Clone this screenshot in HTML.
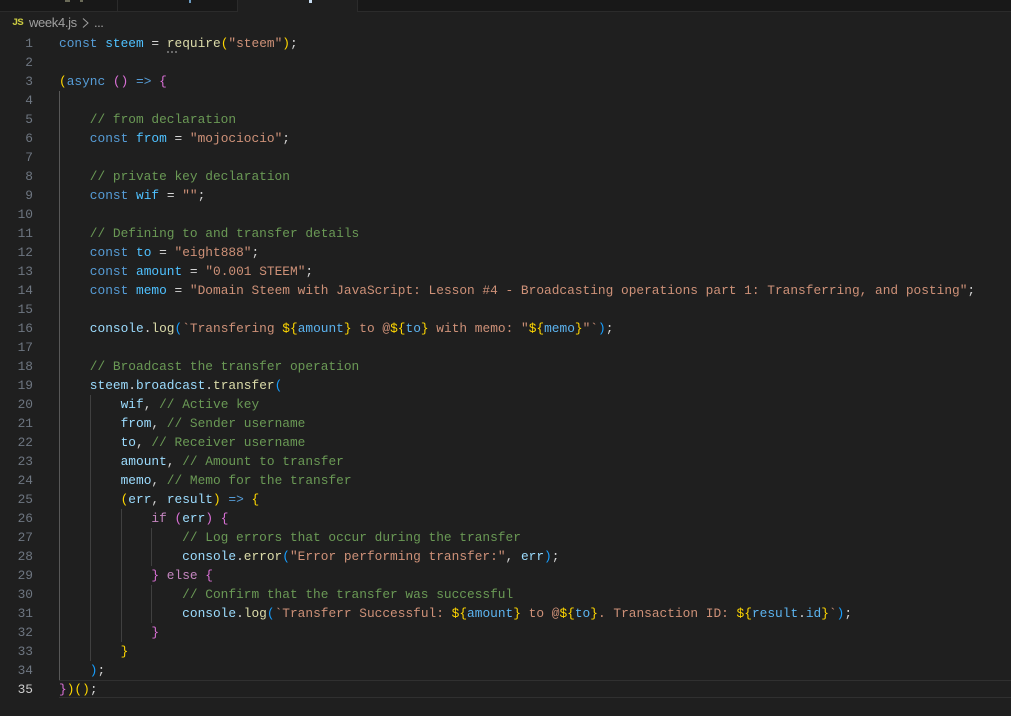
<!DOCTYPE html>
<html><head><meta charset="utf-8"><style>
html,body{margin:0;padding:0;background:#1f1f1f}
body{width:1011px;height:716px;position:relative;overflow:hidden;font-family:"Liberation Mono",monospace}
.a{position:absolute}
.l{position:absolute;left:59px;height:19px;line-height:19px;font-size:12.83px;white-space:pre;color:#ccc}
.n{position:absolute;left:0;width:33px;text-align:right;height:19px;line-height:19px;font-size:12.83px;color:#6e7681}
.g{position:absolute;width:1px;background:#404040}
.k{color:#569cd6}.c{color:#4fc1ff}.v{color:#9cdcfe}.s{color:#ce9178}.m{color:#6a9955}.f{color:#dcdcaa}.x{color:#c586c0}
.y{color:#ffd700}.p{color:#da70d6}.b{color:#179fff}.o{color:#d4d4d4}.t{color:#5cb4f0}
</style></head><body>
<div class="a" style="left:0;top:0;width:1011px;height:11px;background:#181818"></div>
<div class="a" style="left:0;top:11px;width:1011px;height:1px;background:#2b2b2b"></div>
<div class="a" style="left:117px;top:0;width:1px;height:11px;background:#2b2b2b"></div>
<div class="a" style="left:237px;top:0;width:1px;height:11px;background:#2b2b2b"></div>
<div class="a" style="left:238px;top:0;width:119px;height:12px;background:#1f1f1f"></div>
<div class="a" style="left:357px;top:0;width:1px;height:11px;background:#2b2b2b"></div>
<div class="a" style="left:65px;top:0;width:5px;height:2px;background:#6a6a58"></div>
<div class="a" style="left:80px;top:0;width:3px;height:2px;background:#6a6a58"></div>
<div class="a" style="left:189px;top:0;width:2px;height:3px;background:#6a9ac0"></div>
<div class="a" style="left:309px;top:0;width:3px;height:3px;background:#c8dcf0"></div>

<div class="a" style="left:12px;top:17px;height:12px;font:bold 10.5px/12px 'Liberation Mono',monospace;color:#cbcb41;letter-spacing:-.9px">JS</div>
<div class="a" style="left:29px;top:15px;height:16px;font:13px/16px 'Liberation Sans',sans-serif;letter-spacing:-.35px;color:#a0a0a0">week4.js</div>
<svg class="a" style="left:81px;top:17px" width="10" height="12" viewBox="0 0 10 12"><path d="M2 1.5 7 6 2 10.5" fill="none" stroke="#a0a0a0" stroke-width="1"/></svg>
<div class="a" style="left:94px;top:15px;height:16px;font:13px/16px 'Liberation Sans',sans-serif;letter-spacing:-.5px;color:#a0a0a0">...</div>

<div class="a" style="left:59px;top:680px;width:952px;height:1px;background:#303030"></div>
<div class="a" style="left:59px;top:697px;width:952px;height:1px;background:#303030"></div>

<div class="g" style="left:59px;top:91px;height:589px;background:#585858"></div>
<div class="g" style="left:90px;top:395px;height:266px"></div>
<div class="g" style="left:121px;top:509px;height:133px"></div>
<div class="g" style="left:151px;top:528px;height:38px"></div>
<div class="g" style="left:151px;top:585px;height:38px"></div>

<svg class="a" style="left:167px;top:51px" width="50" height="3"><path d="M0 1h2M4 1h2M8 1h2" stroke="#b5b5b5" stroke-width="1"/></svg>

<div class="n" style="top:34px">1</div><div class="l" style="top:34px"><span class="k">const</span> <span class="c">steem</span> <span class="o">=</span> <span class="f">require</span><span class="y">(</span><span class="s">"steem"</span><span class="y">)</span><span class="o">;</span></div>
<div class="n" style="top:53px">2</div>
<div class="n" style="top:72px">3</div><div class="l" style="top:72px"><span class="y">(</span><span class="k">async</span> <span class="p">()</span> <span class="k">=&gt;</span> <span class="p">{</span></div>
<div class="n" style="top:91px">4</div>
<div class="n" style="top:110px">5</div><div class="l m" style="top:110px">    // from declaration</div>
<div class="n" style="top:129px">6</div><div class="l" style="top:129px">    <span class="k">const</span> <span class="c">from</span> <span class="o">=</span> <span class="s">"mojociocio"</span><span class="o">;</span></div>
<div class="n" style="top:148px">7</div>
<div class="n" style="top:167px">8</div><div class="l m" style="top:167px">    // private key declaration</div>
<div class="n" style="top:186px">9</div><div class="l" style="top:186px">    <span class="k">const</span> <span class="c">wif</span> <span class="o">=</span> <span class="s">""</span><span class="o">;</span></div>
<div class="n" style="top:205px">10</div>
<div class="n" style="top:224px">11</div><div class="l m" style="top:224px">    // Defining to and transfer details</div>
<div class="n" style="top:243px">12</div><div class="l" style="top:243px">    <span class="k">const</span> <span class="c">to</span> <span class="o">=</span> <span class="s">"eight888"</span><span class="o">;</span></div>
<div class="n" style="top:262px">13</div><div class="l" style="top:262px">    <span class="k">const</span> <span class="c">amount</span> <span class="o">=</span> <span class="s">"0.001 STEEM"</span><span class="o">;</span></div>
<div class="n" style="top:281px">14</div><div class="l" style="top:281px">    <span class="k">const</span> <span class="c">memo</span> <span class="o">=</span> <span class="s">"Domain Steem with JavaScript: Lesson #4 - Broadcasting operations part 1: Transferring, and posting"</span><span class="o">;</span></div>
<div class="n" style="top:300px">15</div>
<div class="n" style="top:319px">16</div><div class="l" style="top:319px">    <span class="v">console</span><span class="o">.</span><span class="f">log</span><span class="b">(</span><span class="s">`Transfering </span><span class="y">${</span><span class="t">amount</span><span class="y">}</span><span class="s"> to @</span><span class="y">${</span><span class="t">to</span><span class="y">}</span><span class="s"> with memo: "</span><span class="y">${</span><span class="t">memo</span><span class="y">}</span><span class="s">"`</span><span class="b">)</span><span class="o">;</span></div>
<div class="n" style="top:338px">17</div>
<div class="n" style="top:357px">18</div><div class="l m" style="top:357px">    // Broadcast the transfer operation</div>
<div class="n" style="top:376px">19</div><div class="l" style="top:376px">    <span class="v">steem</span><span class="o">.</span><span class="v">broadcast</span><span class="o">.</span><span class="f">transfer</span><span class="b">(</span></div>
<div class="n" style="top:395px">20</div><div class="l" style="top:395px">        <span class="v">wif</span><span class="o">,</span> <span class="m">// Active key</span></div>
<div class="n" style="top:414px">21</div><div class="l" style="top:414px">        <span class="v">from</span><span class="o">,</span> <span class="m">// Sender username</span></div>
<div class="n" style="top:433px">22</div><div class="l" style="top:433px">        <span class="v">to</span><span class="o">,</span> <span class="m">// Receiver username</span></div>
<div class="n" style="top:452px">23</div><div class="l" style="top:452px">        <span class="v">amount</span><span class="o">,</span> <span class="m">// Amount to transfer</span></div>
<div class="n" style="top:471px">24</div><div class="l" style="top:471px">        <span class="v">memo</span><span class="o">,</span> <span class="m">// Memo for the transfer</span></div>
<div class="n" style="top:490px">25</div><div class="l" style="top:490px">        <span class="y">(</span><span class="v">err</span><span class="o">,</span> <span class="v">result</span><span class="y">)</span> <span class="k">=&gt;</span> <span class="y">{</span></div>
<div class="n" style="top:509px">26</div><div class="l" style="top:509px">            <span class="x">if</span> <span class="p">(</span><span class="v">err</span><span class="p">)</span> <span class="p">{</span></div>
<div class="n" style="top:528px">27</div><div class="l m" style="top:528px">                // Log errors that occur during the transfer</div>
<div class="n" style="top:547px">28</div><div class="l" style="top:547px">                <span class="v">console</span><span class="o">.</span><span class="f">error</span><span class="b">(</span><span class="s">"Error performing transfer:"</span><span class="o">,</span> <span class="v">err</span><span class="b">)</span><span class="o">;</span></div>
<div class="n" style="top:566px">29</div><div class="l" style="top:566px">            <span class="p">}</span> <span class="x">else</span> <span class="p">{</span></div>
<div class="n" style="top:585px">30</div><div class="l m" style="top:585px">                // Confirm that the transfer was successful</div>
<div class="n" style="top:604px">31</div><div class="l" style="top:604px">                <span class="v">console</span><span class="o">.</span><span class="f">log</span><span class="b">(</span><span class="s">`Transferr Successful: </span><span class="y">${</span><span class="t">amount</span><span class="y">}</span><span class="s"> to @</span><span class="y">${</span><span class="t">to</span><span class="y">}</span><span class="s">. Transaction ID: </span><span class="y">${</span><span class="t">result</span><span class="o">.</span><span class="t">id</span><span class="y">}</span><span class="s">`</span><span class="b">)</span><span class="o">;</span></div>
<div class="n" style="top:623px">32</div><div class="l" style="top:623px">            <span class="p">}</span></div>
<div class="n" style="top:642px">33</div><div class="l" style="top:642px">        <span class="y">}</span></div>
<div class="n" style="top:661px">34</div><div class="l" style="top:661px">    <span class="b">)</span><span class="o">;</span></div>
<div class="n" style="top:680px;color:#ccc">35</div><div class="l" style="top:680px"><span class="p">}</span><span class="y">)()</span><span class="o">;</span></div>
</body></html>
